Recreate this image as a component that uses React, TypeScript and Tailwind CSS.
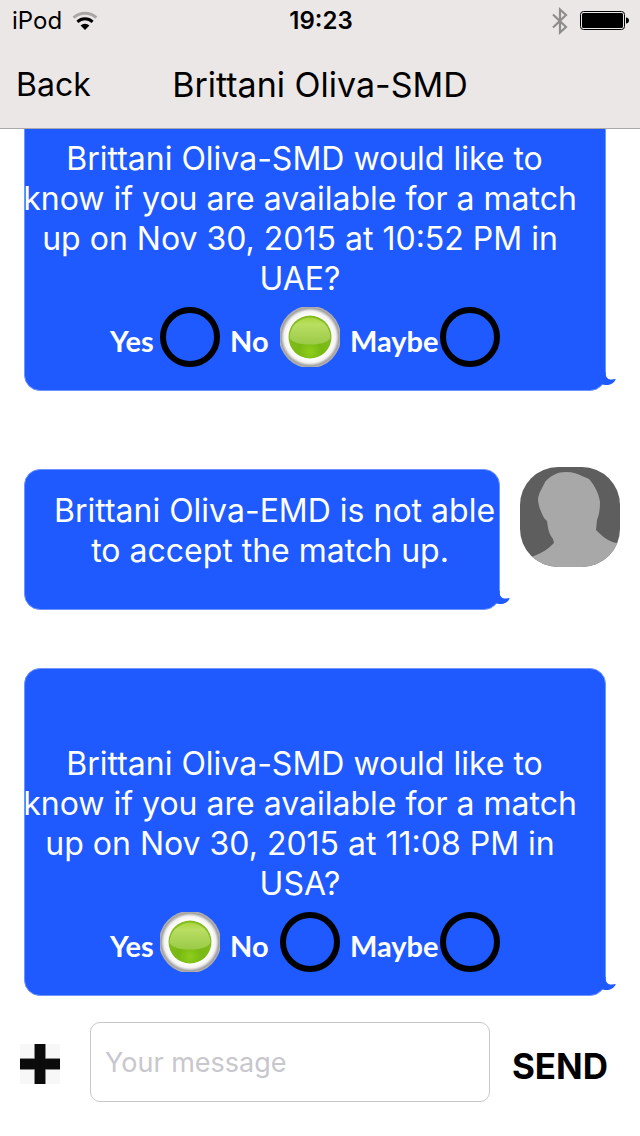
import React from "react";

type Choice = "Yes" | "No" | "Maybe";

function WifiIcon() {
  return (
    <svg width="26" height="20" viewBox="0 0 26 20" aria-hidden="true">
      <path d="M1.6 6.6A17 17 0 0 1 24.4 6.6" fill="none" stroke="#a9a6a5" strokeWidth="3" />
      <path d="M5.4 10.8A11.2 11.2 0 0 1 20.6 10.8" fill="none" stroke="#000" strokeWidth="3" />
      <path d="M13 19L8.6 14.6A6.4 6.4 0 0 1 17.4 14.6Z" fill="#000" />
    </svg>
  );
}

function BluetoothIcon() {
  return (
    <svg width="16" height="28" viewBox="0 0 16 28" aria-hidden="true">
      <path
        d="M1 7.5L14 20L8 25.5V2.5L14 8L1 20.5"
        fill="none"
        stroke="#8f8d8c"
        strokeWidth="2.2"
      />
    </svg>
  );
}

function BatteryIcon() {
  return (
    <svg width="50" height="20" viewBox="0 0 50 20" aria-hidden="true">
      <rect x="0.5" y="0.5" width="44" height="18" rx="3" fill="none" stroke="#000" />
      <rect x="2" y="2" width="41" height="15" rx="1.5" fill="#000" />
      <path d="M46 6.5C48 6.5 49 8 49 9.5S48 12.5 46 12.5Z" fill="#000" />
    </svg>
  );
}

function StatusBar() {
  return (
    <div className="grid h-10 grid-cols-3 items-center pt-[2px] pr-[10px] pl-3 text-[24px] leading-7">
      <div className="flex items-center gap-[10px]">
        <span>iPod</span>
        <WifiIcon />
      </div>
      <span className="text-center font-semibold">19:23</span>
      <div className="flex items-center justify-end gap-3">
        <BluetoothIcon />
        <BatteryIcon />
      </div>
    </div>
  );
}

function GreenLight({ id }: { id: string }) {
  return (
    <svg
      viewBox="0 0 60 60"
      className="pointer-events-none hidden size-[60px] [grid-area:1/1] peer-checked:block"
      aria-hidden="true"
    >
      <defs>
        <radialGradient id={`${id}-rim`}>
          <stop offset="0.72" stopColor="#ffffff" />
          <stop offset="0.84" stopColor="#f0f0f0" />
          <stop offset="0.93" stopColor="#a2a2a2" />
          <stop offset="1" stopColor="#b9b4ac" />
        </radialGradient>
        <radialGradient id={`${id}-base`} cx="0.5" cy="0.84" r="0.6">
          <stop offset="0" stopColor="#8fce1c" />
          <stop offset="0.45" stopColor="#78b913" />
          <stop offset="1" stopColor="#82bc20" />
        </radialGradient>
        <linearGradient id={`${id}-shine`} x1="0" y1="0" x2="0" y2="1">
          <stop offset="0" stopColor="#a9d63c" />
          <stop offset="0.25" stopColor="#b9de62" />
          <stop offset="1" stopColor="#9bca48" />
        </linearGradient>
      </defs>
      <circle cx="30" cy="30" r="31" fill={`url(#${id}-rim)`} />
      <circle cx="30" cy="30" r="21.5" fill={`url(#${id}-base)`} />
      <path
        d="M9.6 31A20.4 20.4 0 0 1 50.4 31C47 36 39 37.5 30 37.5S13 36 9.6 31Z"
        fill={`url(#${id}-shine)`}
      />
    </svg>
  );
}

function Option({ group, choice, picked, textClass }: {
  group: string;
  choice: Choice;
  picked: Choice;
  textClass: string;
}) {
  const id = `${group}-${choice}`;
  return (
    <div className="flex items-center">
      <label htmlFor={id} className={`pt-2 font-[Lato,sans-serif] text-[29px] leading-8 font-bold ${textClass}`}>
        {choice}
      </label>
      <span className="grid">
        <input
          type="radio"
          id={id}
          name={group}
          defaultChecked={choice === picked}
          className="peer size-[60px] appearance-none rounded-full border-[6px] border-black [grid-area:1/1] checked:border-transparent"
        />
        <GreenLight id={id} />
      </span>
    </div>
  );
}

function Bubble({ className, children }: { className: string; children: React.ReactNode }) {
  return (
    <div className={`relative rounded-2xl border border-[#6f94ff] bg-[#1e5aff] text-center text-white ${className}`}>
      {children}
      <svg
        className="absolute -right-[11px] bottom-0 h-5 w-5"
        viewBox="0 0 20 20"
        aria-hidden="true"
      >
        <path d="M2 2H9.6V4C10 8.5 13 10.5 19.8 9C18.5 13 14 15.5 9 15L4 14Z" fill="#1e5aff" />
      </svg>
    </div>
  );
}

function Lines({ lines }: { lines: string[] }) {
  return (
    <p className="text-[32px] leading-10">
      {lines.map((line, i) => (
        <span key={line} className="flex justify-center whitespace-pre">
          {i === 0 ? " " + line : line}
        </span>
      ))}
    </p>
  );
}

function Invitation({ id, lines, picked }: { id: string; lines: string[]; picked: Choice }) {
  return (
    <Bubble className="mr-[34px] ml-6 pt-[75px] pb-[23px]">
      <div className="pr-[30px]">
        <Lines lines={lines} />
      </div>
      <div className="mt-2 flex gap-[10px] pl-[85px] text-left">
        <Option group={id} choice="Yes" picked={picked} textClass="w-[50px]" />
        <Option group={id} choice="No" picked={picked} textClass="w-[50px]" />
        <Option group={id} choice="Maybe" picked={picked} textClass="w-[90px]" />
      </div>
    </Bubble>
  );
}

function Avatar() {
  return (
    <svg
      viewBox="0 0 100 100"
      className="size-[100px] shrink-0 rounded-[38px] bg-[#5e5e5e]"
      role="img"
      aria-label="Profile"
    >
      <path
        d="M0 95L14 89C22 86 28 82 34 76L33 72C29 67 28 62 27 54L24 51C20 43 18 37 18 32C19 25 23 20 25 15C31 8 38 5 46 5C53 5 58 7 62 9L69 12C76 20 79 28 80 35C80 43 79 48 77 53L76 63C83 70 89 75 97 76L100 76V100H0Z"
        fill="#a8a8a8"
      />
    </svg>
  );
}

export default function App() {
  return (
    <div className="flex h-screen flex-col bg-white font-[Inter,sans-serif] text-black">
      <header className="z-10 shrink-0 border-b border-[#aaa8a8] bg-[#ebe7e6]">
        <StatusBar />
        <div className="grid h-[88px] grid-cols-[1fr_auto_1fr] items-center px-4 pt-[2px] text-[34px] leading-[44px]">
          <button type="button" className="justify-self-start text-[32px]">Back</button>
          <h1>Brittani Oliva-SMD</h1>
        </div>
      </header>

      <main className="flex min-h-0 flex-1 flex-col justify-end overflow-hidden">
        <Invitation
          id="first"
          picked="No"
          lines={[
            "Brittani Oliva-SMD would like to",
            "know if you are available for a match",
            "up on Nov 30, 2015 at 10:52 PM in",
            "UAE?",
          ]}
        />
        <div className="mt-[76px] mb-[58px] flex items-start gap-5 pr-5 pl-6">
          <Bubble className="mt-[2px] min-w-0 flex-1 pt-[21px] pb-[38px] pl-4">
            <Lines lines={["Brittani Oliva-EMD is not able", "to accept the match up."]} />
          </Bubble>
          <Avatar />
        </div>
        <Invitation
          id="second"
          picked="Yes"
          lines={[
            "Brittani Oliva-SMD would like to",
            "know if you are available for a match",
            "up on Nov 30, 2015 at 11:08 PM in",
            "USA?",
          ]}
        />
      </main>

      <form className="flex shrink-0 items-center pt-[26px] pr-5 pb-[34px] pl-5" onSubmit={(e) => e.preventDefault()}>
        <button type="button" aria-label="Add attachment" className="mt-1 mr-[30px] size-10 bg-[#f7f7f7]">
          <svg viewBox="0 0 40 40" className="size-10" aria-hidden="true">
            <path d="M20 0V40M0 20H40" stroke="#b5b5b5" strokeWidth="12" />
            <path d="M20 0V40M0 20H40" stroke="#0b0b0b" strokeWidth="10.5" />
          </svg>
        </button>
        <input
          type="text"
          aria-label="Your message"
          placeholder="Your message"
          className="h-20 min-w-0 flex-1 rounded-[10px] border border-[#c8c8c8] px-[14px] text-[27px] placeholder:text-[#c7c7cd]"
        />
        <button type="submit" className="ml-[10px] w-[120px] pt-2 text-center text-[35px] leading-10 font-bold">
          SEND
        </button>
      </form>
    </div>
  );
}
